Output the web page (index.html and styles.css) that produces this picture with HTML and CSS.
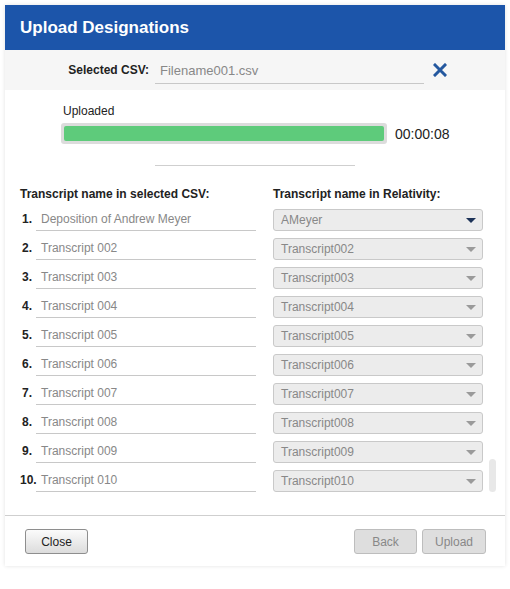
FILE: index.html
```html
<!DOCTYPE html>
<html lang="en">
<head>
    <meta charset="UTF-8">
    <title>Upload Designations</title>
    <link rel="stylesheet" href="styles.css">
</head>
<body>
    <div class="dialog">
        <div class="dialog-header">Upload Designations</div>

        <div class="csv-bar">
            <span class="csv-label">Selected CSV:</span>
            <span class="csv-input">Filename001.csv</span>
            <svg class="csv-clear" width="14" height="14" viewBox="0 0 14 14">
                <path d="M2 2 L12 12 M12 2 L2 12" stroke="#24589f" stroke-width="3" stroke-linecap="square"/>
            </svg>
        </div>

        <div class="progress-block">
            <div class="progress-label">Uploaded</div>
            <div class="progress-row">
                <div class="progress-track"><div class="progress-fill"></div></div>
                <span class="progress-time">00:00:08</span>
            </div>
        </div>
        <div class="divider"></div>

        <div class="mapping">
            <div class="col-head">Transcript name in selected CSV:</div>
            <div class="col-head">Transcript name in Relativity:</div>
        </div>

        <div class="rows-wrap">
            <div class="rows" id="rows"></div>
            <div class="scroll"><div class="scroll-thumb"></div></div>
        </div>

        <div class="dialog-footer">
            <button class="btn">Close</button>
            <div class="spacer"></div>
            <button class="btn disabled">Back</button>
            <button class="btn disabled">Upload</button>
        </div>
    </div>

    <script>
        const rows = document.getElementById('rows');
        for (let i = 1; i <= 10; i++) {
            const n = String(i).padStart(3, '0');
            const left = i === 1 ? 'Deposition of Andrew Meyer' : 'Transcript ' + n;
            const right = i === 1 ? 'AMeyer' : 'Transcript' + n;
            rows.insertAdjacentHTML('beforeend',
                `<div class="row">
                    <span class="num">${i}.</span>
                    <span class="name">${left}</span>
                    <div class="select${i === 1 ? ' active' : ''}">
                        <span>${right}</span>
                        <span class="caret"></span>
                    </div>
                </div>`);
        }
    </script>
</body>
</html>
```

FILE: styles.css
```css
body {
    margin: 0;
    background: #fff;
    font-family: "Liberation Sans", Arial, sans-serif;
    color: #222;
}
.dialog {
    width: 500px;
    margin: 5px;
    background: #fff;
    box-shadow: 0 0 4px rgba(0, 0, 0, 0.12);
}
.dialog-header {
    height: 45px;
    padding-left: 15px;
    display: flex;
    align-items: center;
    background: #1c55aa;
    color: #fff;
    font-size: 17px;
    font-weight: bold;
}
.csv-bar {
    height: 40px;
    display: flex;
    align-items: center;
    background: #f6f6f6;
}
.csv-label {
    margin-left: 58px;
    width: 86px;
    text-align: right;
    white-space: nowrap;
    font-size: 12px;
    font-weight: bold;
}
.csv-input {
    margin-left: 6px;
    width: 264px;
    padding: 5px 0 5px 5px;
    border-bottom: 1px solid #c8c8c8;
    font-size: 13px;
    color: #888;
    position: relative;
    top: 1px;
}
.csv-clear {
    margin-left: 9px;
}
.progress-block {
    padding: 14px 0 0 56px;
}
.progress-label {
    font-size: 12px;
    height: 19px;
    padding-left: 2px;
}
.progress-row {
    display: flex;
    align-items: center;
}
.progress-track {
    width: 320px;
    height: 15px;
    padding: 3px;
    background: #dcdcdc;
    border-radius: 3px;
}
.progress-fill {
    height: 100%;
    background: #5ecb7b;
    border-radius: 2px;
}
.progress-time {
    margin-left: 8px;
    font-size: 14px;
}
.divider {
    width: 200px;
    height: 1px;
    margin: 21px auto 0;
    background: #cfcfcf;
}
.mapping {
    display: grid;
    grid-template-columns: 253px 210px;
    padding: 21px 0 0 15px;
}
.col-head {
    font-size: 12px;
    font-weight: bold;
    height: 22px;
}
.rows-wrap {
    display: flex;
    height: 306px;
    border-bottom: 1px solid #cfcfcf;
}
.rows {
    padding-left: 15px;
}
.row {
    display: grid;
    grid-template-columns: 16px 220px 227px;
    height: 29px;
    align-items: start;
}
.row .num {
    font-size: 12px;
    font-weight: bold;
    text-align: right;
    padding-right: 4px;
    padding-top: 3px;
}
.row .name {
    font-size: 12px;
    color: #888;
    padding: 3px 0 4px 5px;
    border-bottom: 1px solid #c8c8c8;
}
.select {
    margin-left: 17px;
    height: 20px;
    border: 1px solid #c9c9c9;
    border-radius: 3px;
    background: #ececec;
    display: flex;
    align-items: center;
    justify-content: space-between;
    padding: 0 6px 0 7px;
    font-size: 12px;
    color: #888;
}
.caret {
    width: 0;
    height: 0;
    border-left: 5px solid transparent;
    border-right: 5px solid transparent;
    border-top: 5px solid #9a9a9a;
}
.select.active .caret {
    border-top-color: #1d3358;
}
.scroll {
    margin-left: 6px;
    padding-top: 250px;
}
.scroll-thumb {
    width: 7px;
    height: 33px;
    border-radius: 4px;
    background: #e8e8e8;
}
.dialog-footer {
    display: flex;
    gap: 5px;
    padding: 13px 19px 12px 20px;
}
.spacer {
    flex: 1;
}
.btn {
    height: 25px;
    min-width: 63px;
    font-family: inherit;
    font-size: 12px;
    color: #222;
    border: 1px solid #8e8e8e;
    border-radius: 3px;
    background: linear-gradient(#fbfbfb, #dcdcdc);
    padding: 0 12px;
}
.btn.disabled {
    color: #888;
    border-color: #bdbdbd;
    background: #dedede;
}
```
